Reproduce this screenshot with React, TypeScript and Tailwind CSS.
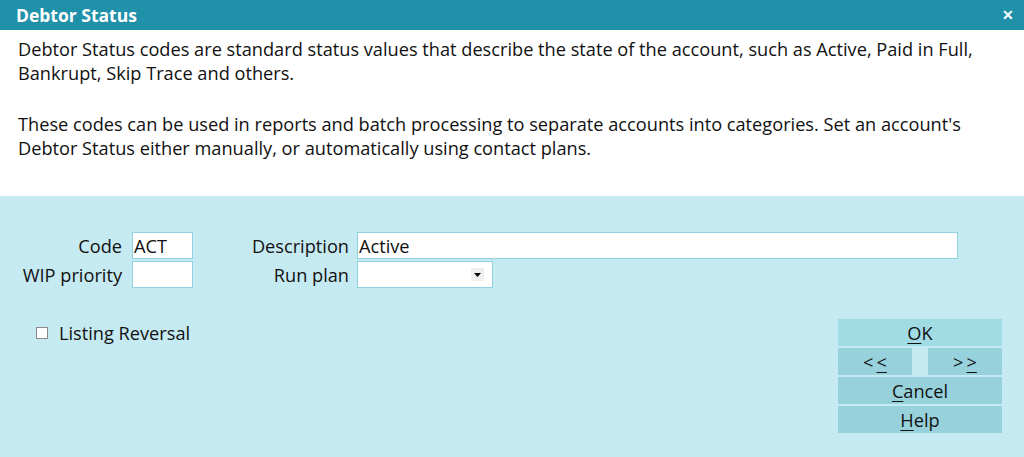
import React from "react";

const font = { fontFamily: '"Open Sans", "Noto Sans", sans-serif' };

function U({ children }: { children: React.ReactNode }) {
  return <span className="underline underline-offset-[3px] decoration-1">{children}</span>;
}

export default function App() {
  return (
    <div className="w-[1024px] h-[457px] flex flex-col bg-[#c6eaf2] text-[#111]" style={font}>
      <div className="h-[30px] bg-[#1f91a9] flex items-center justify-between pl-4 pr-[10px] text-white">
        <span className="font-bold text-[17.5px]">Debtor Status</span>
        <span className="font-bold text-[14px] leading-none">✕</span>
      </div>
      <div className="h-[166px] bg-white pl-[18px] pr-2 pt-[6.5px] text-[18.2px] leading-[24.5px]">
        <p>
          Debtor Status codes are standard status values that describe the state of the account, such as Active, Paid in Full,
          <br />
          Bankrupt, Skip Trace and others.
        </p>
        <p className="mt-[26px]">
          These codes can be used in reports and batch processing to separate accounts into categories. Set an account's
          <br />
          Debtor Status either manually, or automatically using contact plans.
        </p>
      </div>
      <div className="flex-1 flex flex-col text-[18.2px]">
        <div className="pt-9 flex gap-[2px] flex-col">
          <div className="flex items-center h-[27px]">
            <span className="w-[123px] text-right pr-[1px] pt-[2px] whitespace-nowrap">Code</span>
            <div className="ml-[9px] w-[61px] h-[27px] bg-white border border-[#8fd3e0] flex items-center px-[1px] pt-[2px]">ACT</div>
            <span className="w-[156px] text-right pt-[2px] whitespace-nowrap">Description</span>
            <div className="ml-[8px] w-[601px] h-[27px] bg-white border border-[#8fd3e0] flex items-center px-[1px] pt-[2px]">Active</div>
          </div>
          <div className="flex items-center h-[27px]">
            <span className="w-[123px] text-right pr-[1px] pt-[2px] whitespace-nowrap">WIP priority</span>
            <div className="ml-[9px] w-[61px] h-[27px] bg-white border border-[#8fd3e0]"></div>
            <span className="w-[156px] text-right pt-[2px] whitespace-nowrap">Run plan</span>
            <div className="ml-[8px] w-[136px] h-[27px] bg-white border border-[#8fd3e0] flex items-center justify-end pr-[8px]">
              <div className="w-[13px] h-[13px] bg-[#efefef] flex items-center justify-center">
                <svg width="7" height="4" viewBox="0 0 7 4"><path d="M0 0h7L3.5 4z" fill="#000" /></svg>
              </div>
            </div>
          </div>
        </div>
        <div className="flex justify-between mt-[31px]">
          <div className="flex items-start pl-[36px] pt-[2px]">
            <div className="w-[12px] h-[12px] bg-white border border-[#8a8a8a] mt-[6px]"></div>
            <span className="ml-[11px] leading-[24px]">Listing Reversal</span>
          </div>
          <div className="w-[164px] mr-[22px] flex flex-col gap-[2px]">
            <div className="h-[27px] bg-[#a1dce5] flex items-center justify-center pt-[2px]"><U>O</U>K</div>
            <div className="flex justify-between">
              <div className="w-[74px] h-[27px] bg-[#97d1dc] flex items-center justify-center gap-[3px] pt-[2px]"><span>&lt;</span><U>&lt;</U></div>
              <div className="w-[74px] h-[27px] bg-[#97d1dc] flex items-center justify-center gap-[3px] pt-[2px]"><span>&gt;</span><U>&gt;</U></div>
            </div>
            <div className="h-[27px] bg-[#97d1dc] flex items-center justify-center pt-[2px]"><U>C</U>ancel</div>
            <div className="h-[27px] bg-[#97d1dc] flex items-center justify-center pt-[2px]"><U>H</U>elp</div>
          </div>
        </div>
      </div>
    </div>
  );
}
